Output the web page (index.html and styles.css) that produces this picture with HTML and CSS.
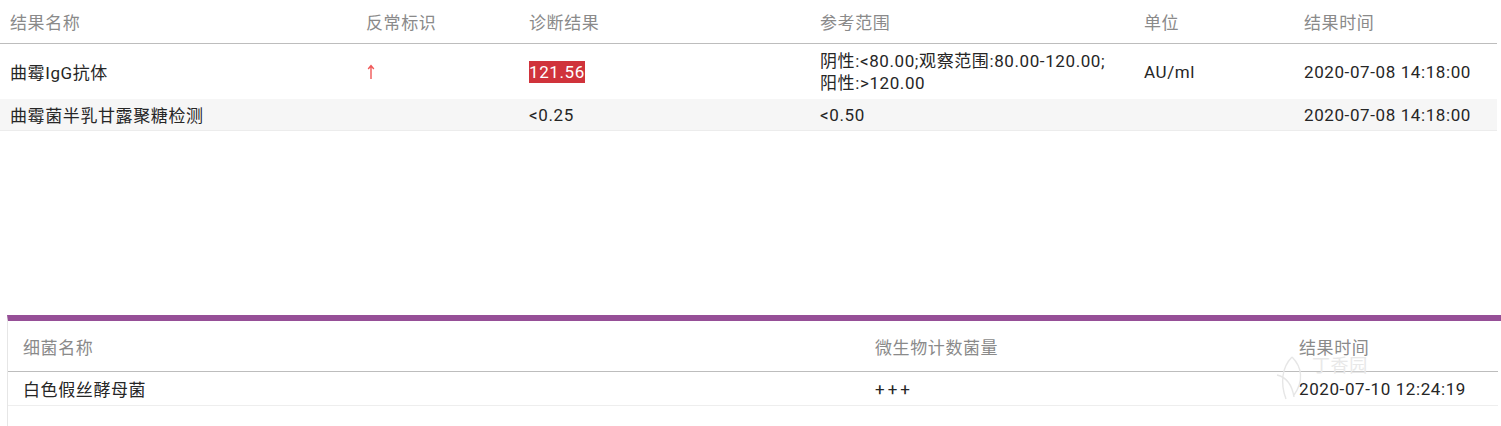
FILE: index.html
```html
<!DOCTYPE html>
<html lang="zh-CN">
<head>
<meta charset="utf-8">
<title>检验结果</title>
<link rel="stylesheet" href="styles.css">
</head>
<body>
<section class="lab">
  <div class="row head lab-cols">
    <div>结果名称</div><div>反常标识</div><div>诊断结果</div><div>参考范围</div><div>单位</div><div>结果时间</div>
  </div>
  <div class="row r1 lab-cols">
    <div>曲霉IgG抗体</div>
    <div class="flag"><svg width="8" height="16" viewBox="0 0 8 16"><path d="M4 1.5 V15 M1.2 5 L4 1.5 L6.8 5" fill="none" stroke="#f05858" stroke-width="1.4"/></svg></div>
    <div><span class="hl">121.56</span></div>
    <div class="range">阴性:&lt;80.00;观察范围:80.00-120.00;<br>阳性:&gt;120.00</div>
    <div>AU/ml</div>
    <div>2020-07-08 14:18:00</div>
  </div>
  <div class="row r2 lab-cols">
    <div>曲霉菌半乳甘露聚糖检测</div>
    <div></div>
    <div>&lt;0.25</div>
    <div>&lt;0.50</div>
    <div></div>
    <div>2020-07-08 14:18:00</div>
  </div>
</section>

<section class="micro">
  <div class="row mhead micro-cols">
    <div>细菌名称</div><div>微生物计数菌量</div><div>结果时间</div>
  </div>
  <div class="row mrow micro-cols">
    <div>白色假丝酵母菌</div><div class="plus">+++</div><div>2020-07-10 12:24:19</div>
  </div>
  <div class="mark">
    <svg width="34" height="50" viewBox="0 0 34 50"><path d="M18 4 C8 14 6 30 12 46 M18 4 C28 14 30 28 20 42 M3 22 C12 24 18 32 20 44" fill="none" stroke="#e6e6e6" stroke-width="1.4"/></svg>
    <span>丁香园</span>
  </div>
</section>
</body>
</html>
```

FILE: styles.css
```css
html, body {
  margin: 0;
  padding: 0;
  background: #fff;
}
body {
  font-family: Roboto, "Noto Sans CJK SC", sans-serif;
  color: #262626;
  font-size: 17px;
  letter-spacing: 0.6px;
  width: 1501px;
  height: 426px;
  overflow: hidden;
}
.row {
  display: grid;
  align-items: center;
}
.lab {
  margin-right: 4px;
}
.lab-cols {
  grid-template-columns: 356px 163px 291px 324px 160px 1fr;
  padding-left: 10px;
}
.head {
  height: 43px;
  color: #8a8a8a;
  font-size: 17px;
  border-bottom: 1px solid #bdbdbd;
}
.r1 {
  height: 55px;
}
.range {
  line-height: 22px;
  padding-top: 1px;
}
.r2 {
  height: 31px;
  background: #f6f6f6;
  border-bottom: 1px solid #ececec;
}
.flag {
  display: flex;
  align-items: center;
  padding-left: 1px;
}
.hl {
  background: #d0333b;
  color: #fff;
  padding: 1px 0;
}
.plus {
  letter-spacing: 3px;
}
.micro {
  margin: 184px 0 0 7px;
  border-left: 1px solid #e6e6e6;
  border-top: 6px solid #964f97;
  height: 111px;
  position: relative;
}
.micro-cols {
  grid-template-columns: 852px 424px 1fr;
  padding-left: 15px;
  margin-right: 3px;
}
.mhead {
  height: 50px;
  color: #8a8a8a;
  font-size: 17px;
  border-bottom: 1px solid #bdbdbd;
}
.mrow {
  height: 33px;
  border-bottom: 1px solid #eeeeee;
}
.mark {
  position: absolute;
  left: 1266px;
  top: 32px;
  display: flex;
  align-items: flex-start;
  gap: 4px;
  pointer-events: none;
}
.mark span {
  color: #e8e8e8;
  font-size: 18px;
  line-height: 18px;
  margin-top: 4px;
}
```
